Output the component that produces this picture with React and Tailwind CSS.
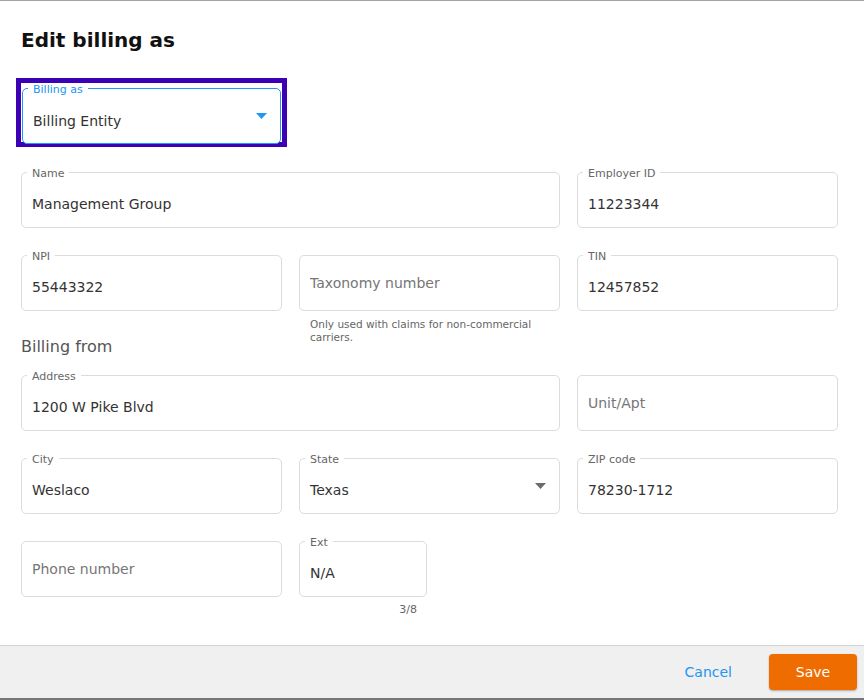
import { useState } from "react";

function Field({ label, value, placeholder, className = "" }) {
  const [val, setVal] = useState(value || "");
  return (
    <div className={`relative h-[56px] rounded-[5px] border border-[#dcdcdc] bg-white ${className}`}>
      {label && (
        <span className="absolute -top-[6px] left-[5px] bg-white px-[5px] text-[11px] leading-[13px] text-[#666]">
          {label}
        </span>
      )}
      <input
        value={val}
        onChange={(e) => setVal(e.target.value)}
        placeholder={placeholder}
        className={`h-full w-full rounded-[5px] bg-transparent px-[10px] text-[14px] text-[#333] outline-none placeholder:text-[#767676] ${label ? "pt-[8px]" : ""}`}
      />
    </div>
  );
}

function SelectField({ label, value, focused }) {
  return (
    <div
      className={`relative flex h-[56px] items-center rounded-[5px] bg-white pl-[10px] pr-[13px] ${
        focused ? "h-[54px] border-[1.5px] border-[#2196f3]" : "border border-[#dcdcdc]"
      }`}
    >
      <span
        className={`absolute -top-[6px] left-[5px] bg-white px-[5px] text-[11px] leading-[13px] ${
          focused ? "text-[#2196f3]" : "text-[#666]"
        }`}
      >
        {label}
      </span>
      <span className={`flex-1 text-[14px] text-[#333] ${focused ? "pt-[11px]" : "pt-[9px]"}`}>{value}</span>
      <svg width="11" height="6" viewBox="0 0 11 6" className="shrink-0">
        <path d="M0 0h11L5.5 6z" fill={focused ? "#2196f3" : "#6b6b6b"} />
      </svg>
    </div>
  );
}

export default function App() {
  return (
    <div className="flex h-[700px] w-[864px] flex-col border-t border-[#a3a3a3] bg-white font-['DejaVu_Sans',sans-serif]">
      <div className="flex-1 px-[21px] pt-[27px]">
        <h1 className="text-[20px] font-bold leading-[24px] text-[#111]">Edit billing as</h1>

        <div className="-ml-[5px] mt-[26px] h-[69px] w-[271px] border-[5px] border-[#3c00b5] pl-[1px] pt-[5px]">
          <div className="w-[259px]">
            <SelectField label="Billing as" value="Billing Entity" focused />
          </div>
        </div>

        <div className="mt-[25px] grid grid-cols-[261px_261px_261px] gap-x-[17px] gap-y-[27px]">
          <Field label="Name" value="Management Group" className="col-span-2" />
          <Field label="Employer ID" value="11223344" />
          <Field label="NPI" value="55443322" />
          <div>
            <Field placeholder="Taxonomy number" />
            <p className="mt-[7px] pl-[11px] pr-[10px] text-[10.5px] leading-[13px] text-[#666]">
              Only used with claims for non-commercial carriers.
            </p>
          </div>
          <Field label="TIN" value="12457852" />
        </div>

        <h2 className="-mt-[7px] mb-[18px] text-[16px] leading-[20px] text-[#555]">Billing from</h2>

        <div className="grid grid-cols-[261px_261px_261px] gap-x-[17px] gap-y-[27px]">
          <Field label="Address" value="1200 W Pike Blvd" className="col-span-2" />
          <Field placeholder="Unit/Apt" />
          <Field label="City" value="Weslaco" />
          <SelectField label="State" value="Texas" />
          <Field label="ZIP code" value="78230-1712" />
          <Field placeholder="Phone number" />
          <div className="w-[128px]">
            <Field label="Ext" value="N/A" />
            <p className="mt-[7px] pr-[10px] text-right text-[11px] leading-[12px] text-[#666]">3/8</p>
          </div>
        </div>
      </div>

      <div className="flex h-[55px] items-center justify-end border-t border-b-[2px] border-t-[#d3d3d3] border-b-[#777] bg-[#f0f0f0] pr-[7px]">
        <button className="mr-[37px] text-[14px] text-[#2196f3]">Cancel</button>
        <button className="h-[36px] w-[88px] rounded-[4px] bg-[#ef6c00] text-[14px] text-white shadow-[0_1px_2px_rgba(0,0,0,0.3)]">
          Save
        </button>
      </div>
    </div>
  );
}
